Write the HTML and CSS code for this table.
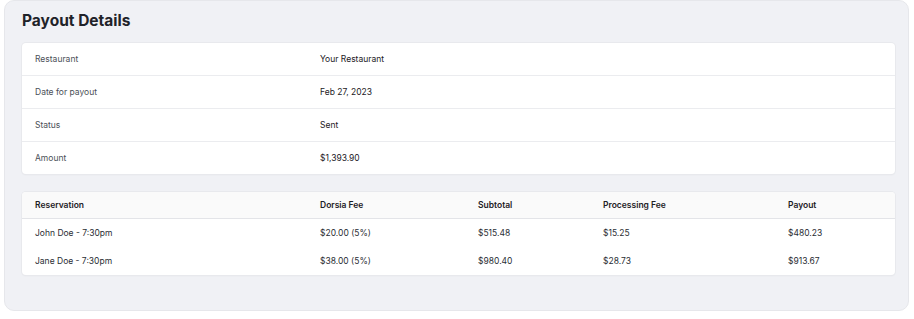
FILE: index.html
```html
<!DOCTYPE html>
<html>
<head>
<meta charset="utf-8">
<link rel="stylesheet" href="styles.css">
</head>
<body>
<div class="panel">
  <h1 class="title">Payout Details</h1>
  <div class="card details">
    <div class="drow"><span class="dlabel">Restaurant</span><span class="dvalue">Your Restaurant</span></div>
    <div class="drow"><span class="dlabel">Date for payout</span><span class="dvalue">Feb 27, 2023</span></div>
    <div class="drow"><span class="dlabel">Status</span><span class="dvalue">Sent</span></div>
    <div class="drow"><span class="dlabel">Amount</span><span class="dvalue">$1,393.90</span></div>
  </div>
  <div class="card table">
    <div class="trow thead">
      <span>Reservation</span><span>Dorsia Fee</span><span>Subtotal</span><span>Processing Fee</span><span>Payout</span>
    </div>
    <div class="trow tbody">
      <span>John Doe - 7:30pm</span><span>$20.00 (5%)</span><span>$515.48</span><span>$15.25</span><span>$480.23</span>
    </div>
    <div class="trow tbody">
      <span>Jane Doe - 7:30pm</span><span>$38.00 (5%)</span><span>$980.40</span><span>$28.73</span><span>$913.67</span>
    </div>
  </div>
</div>
</body>
</html>
```
FILE: styles.css
```css
html, body {
  margin: 0;
  padding: 0;
  background: #ffffff;
}
body {
  font-family: Inter, "Noto Sans", sans-serif;
  color: #111827;
}
.panel {
  margin: 0 5px 0 4px;
  height: 311px;
  box-sizing: border-box;
  background: #f0f1f5;
  border: 1px solid #e6e7eb;
  border-radius: 10px;
  padding: 10px 13px 0 17px;
}
.title {
  margin: 0;
  font-size: 15.5px;
  font-weight: 700;
  line-height: 20px;
  color: #1f2329;
}
.card {
  background: #ffffff;
  border-radius: 4px;
  box-shadow: 0 0 0 1px #e8e9ed, 0 1px 2px rgba(0,0,0,0.06);
  overflow: hidden;
}
.details {
  margin-top: 12px;
}
.drow {
  display: grid;
  grid-template-columns: 285px 1fr;
  height: 33px;
  align-items: center;
  padding-left: 13px;
  font-size: 8.5px;
  border-top: 1px solid #ebecef;
  box-sizing: border-box;
}
.drow:first-child {
  border-top: none;
  height: 32px;
}
.dlabel {
  color: #4b5058;
}
.dvalue {
  color: #1d2025;
}
.table {
  margin-top: 18px;
}
.trow {
  display: grid;
  grid-template-columns: 285px 158px 125px 185px 1fr;
  align-items: center;
  padding-left: 13px;
  font-size: 8.5px;
}
.thead {
  height: 27px;
  background: #fafafa;
  border-bottom: 1px solid #e3e4e8;
  box-sizing: border-box;
  font-weight: 600;
  color: #1d2025;
}
.tbody {
  height: 28px;
  color: #2a2d33;
}
```
